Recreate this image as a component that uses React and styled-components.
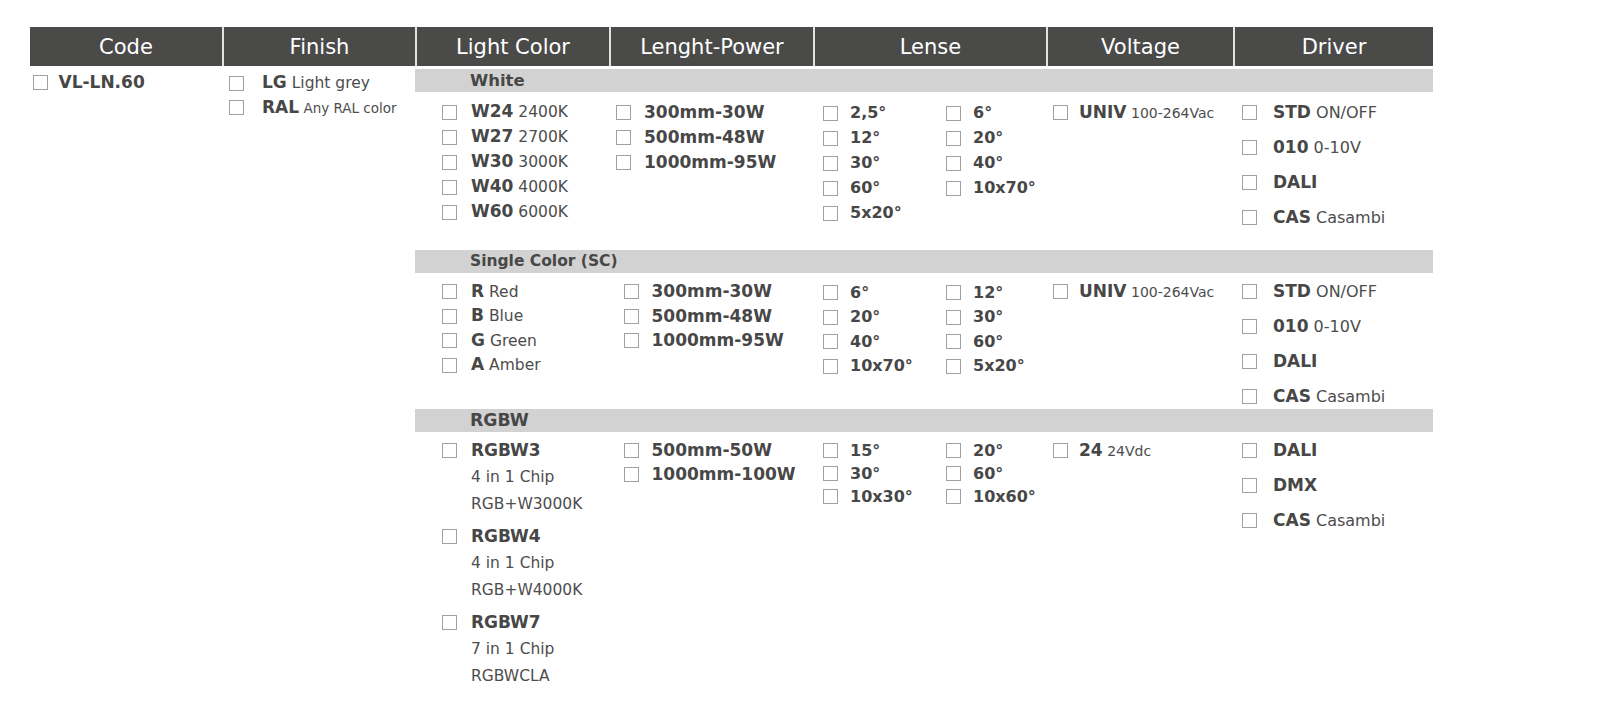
import React from 'react'
import styled, { createGlobalStyle } from 'styled-components'

const GlobalStyle = createGlobalStyle`
  html, body {
    margin: 0;
    background: #fff;
  }
  body {
    font-family: "DejaVu Sans", "Liberation Sans", sans-serif;
    color: #474747;
  }
`

const COLS = '192px 193px 194px 204px 233px 187px 200px'
const SUB_COLS = '194px 204px 233px 187px 200px'

const headers = ['Code', 'Finish', 'Light Color', 'Lenght-Power', 'Lense', 'Voltage', 'Driver']

const sections = [
  {
    title: 'White',
    titleSize: 16.5,
    minH: 158,
    pt: 8,
    pitchGap: 1,
    lenghtPl: 7,
    light: [
      ['W24', '2400K'],
      ['W27', '2700K'],
      ['W30', '3000K'],
      ['W40', '4000K'],
      ['W60', '6000K'],
    ],
    lenght: ['300mm-30W', '500mm-48W', '1000mm-95W'],
    lense: ['2,5°', '6°', '12°', '20°', '30°', '40°', '60°', '10x70°', '5x20°'],
    voltage: ['UNIV', '100-264Vac'],
    driver: [['STD', 'ON/OFF'], ['010', '0-10V'], ['DALI'], ['CAS', 'Casambi']],
  },
  {
    title: 'Single Color (SC)',
    titleSize: 15.5,
    minH: 136,
    pt: 6.5,
    pitchGap: 0.5,
    lenghtPl: 14.5,
    light: [
      ['R', 'Red'],
      ['B', 'Blue'],
      ['G', 'Green'],
      ['A', 'Amber'],
    ],
    lenght: ['300mm-30W', '500mm-48W', '1000mm-95W'],
    lense: ['6°', '12°', '20°', '30°', '40°', '60°', '10x70°', '5x20°'],
    voltage: ['UNIV', '100-264Vac'],
    driver: [['STD', 'ON/OFF'], ['010', '0-10V'], ['DALI'], ['CAS', 'Casambi']],
  },
  {
    title: 'RGBW',
    titleSize: 17.3,
    minH: 260,
    pt: 6,
    pitchGap: 0,
    lenseH: 23,
    lenghtPl: 14.5,
    groups: [
      ['RGBW3', '4 in 1 Chip', 'RGB+W3000K'],
      ['RGBW4', '4 in 1 Chip', 'RGB+W4000K'],
      ['RGBW7', '7 in 1 Chip', 'RGBWCLA'],
    ],
    lenght: ['500mm-50W', '1000mm-100W'],
    lense: ['15°', '20°', '30°', '60°', '10x30°', '10x60°'],
    voltage: ['24', '24Vdc'],
    driver: [['DALI'], ['DMX'], ['CAS', 'Casambi']],
  },
]

const Page = styled.div`
  width: 1600px;
  height: 723px;
  box-sizing: border-box;
  padding: 27px 0 0 30px;
  overflow: hidden;
`

const Table = styled.div`
  display: grid;
  grid-template-columns: ${COLS};
  width: 1403px;
  align-items: start;
`

const HeadCell = styled.div`
  height: 39px;
  margin-bottom: 3px;
  padding-top: 1px;
  box-sizing: border-box;
  background: #4a4a49;
  color: #fff;
  font-size: 21px;
  display: flex;
  align-items: center;
  justify-content: center;
  border-left: ${(p) => (p.first ? 'none' : '2px solid #e2e2e2')};
`

const List = styled.div`
  display: flex;
  flex-direction: column;
  gap: ${(p) => p.gap || 0}px;
  padding: ${(p) => (p.pt === undefined ? 6 : p.pt)}px 0 0 ${(p) => p.pl || 0}px;
`

const LenseGrid = styled.div`
  display: grid;
  grid-template-columns: 123px 1fr;
  row-gap: ${(p) => p.gap || 0}px;
  padding: ${(p) => p.pt}px 0 0 9.5px;
`

const Option = styled.div`
  display: flex;
  align-items: center;
  height: ${(p) => p.h || 24}px;
  gap: ${(p) => p.gap}px;
  white-space: nowrap;
`

const Box = styled.span`
  width: 15px;
  height: 15px;
  box-sizing: border-box;
  border: 1px solid #a0a0a0;
  background: #fff;
  flex-shrink: 0;
`

const Label = styled.span`
  color: #474747;
  line-height: 1;
`

const Strong = styled.b`
  font-weight: 700;
  font-size: ${(p) => p.size || 17}px;
`

const Note = styled.span`
  font-weight: 400;
  font-size: ${(p) => p.size || 15.5}px;
  color: #4d4d4d;
`

const Sections = styled.div`
  grid-column: 3 / 8;
  display: flex;
  flex-direction: column;
`

const Bar = styled.div`
  height: 23px;
  line-height: 23px;
  padding-left: 55px;
  background: #d2d2d2;
  font-weight: 700;
  font-size: ${(p) => p.size}px;
  color: #474747;
`

const Content = styled.div`
  display: grid;
  grid-template-columns: ${SUB_COLS};
  align-items: start;
  min-height: ${(p) => p.minH}px;
`

const Group = styled.div`
  display: flex;
  flex-direction: column;
`

const SubLines = styled.div`
  padding: 2px 0 0 29px;
`

const SubLine = styled.div`
  height: 27px;
  line-height: 27px;
  font-size: 15.5px;
  color: #4d4d4d;
  white-space: nowrap;
`

function Item({ code, note, gap, h, codeSize, noteSize }) {
  return (
    <Option gap={gap} h={h}>
      <Box />
      <Label>
        <Strong size={codeSize}>{code}</Strong>
        {note && <Note size={noteSize}> {note}</Note>}
      </Label>
    </Option>
  )
}

function Section({ s }) {
  return (
    <div>
      <Bar size={s.titleSize}>{s.title}</Bar>
      <Content minH={s.minH}>
        {s.groups ? (
          <List pl={27} pt={s.pt} gap={6}>
            {s.groups.map(([code, a, b]) => (
              <Group key={code}>
                <Item code={code} gap={14} />
                <SubLines>
                  <SubLine>{a}</SubLine>
                  <SubLine>{b}</SubLine>
                </SubLines>
              </Group>
            ))}
          </List>
        ) : (
          <List pl={27} pt={s.pt} gap={s.pitchGap}>
            {s.light.map(([code, note]) => (
              <Item key={code} code={code} note={note} gap={14} />
            ))}
          </List>
        )}
        <List pl={s.lenghtPl} pt={s.pt} gap={s.pitchGap}>
          {s.lenght.map((v) => (
            <Item key={v} code={v} gap={13} />
          ))}
        </List>
        <LenseGrid pt={s.pt + 1} gap={s.pitchGap}>
          {s.lense.map((v) => (
            <Item key={v} code={v} gap={12.5} h={s.lenseH} codeSize={16} />
          ))}
        </LenseGrid>
        <List pl={7} pt={s.pt}>
          <Item code={s.voltage[0]} note={s.voltage[1]} noteSize={14} gap={11} />
        </List>
        <List pl={9} pt={s.pt} gap={11}>
          {s.driver.map(([code, note]) => (
            <Item key={code} code={code} note={note} noteSize={16} gap={16} />
          ))}
        </List>
      </Content>
    </div>
  )
}

export default function App() {
  return (
    <Page>
      <GlobalStyle />
      <Table>
        {headers.map((h, i) => (
          <HeadCell key={h} first={i === 0}>
            {h}
          </HeadCell>
        ))}
        <List pl={2.5} pt={1.5}>
          <Item code="VL-LN.60" gap={11} />
        </List>
        <List pl={7} pt={2}>
          <Item code="LG" note="Light grey" gap={18} />
          <Item code="RAL" note="Any RAL color" noteSize={13.5} gap={18} />
        </List>
        <Sections>
          {sections.map((s) => (
            <Section key={s.title} s={s} />
          ))}
        </Sections>
      </Table>
    </Page>
  )
}
